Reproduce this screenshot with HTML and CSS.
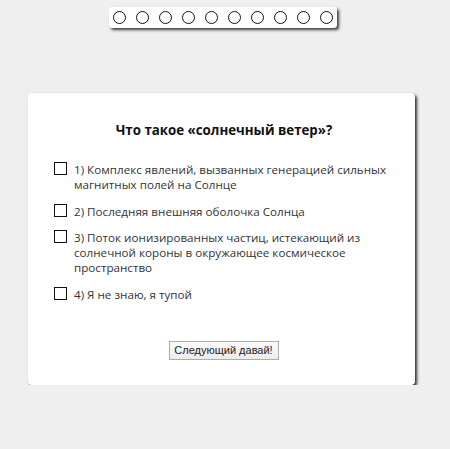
FILE: index.html
```html
<!DOCTYPE html>
<html lang="ru">
<head>
<meta charset="utf-8">
<title>Тест</title>
<link rel="stylesheet" href="styles.css">
</head>
<body>
<div class="progress">
  <span class="dot"></span><span class="dot"></span><span class="dot"></span><span class="dot"></span><span class="dot"></span>
  <span class="dot"></span><span class="dot"></span><span class="dot"></span><span class="dot"></span><span class="dot"></span>
</div>
<div class="card">
  <h1 class="question">Что такое «солнечный ветер»?</h1>
  <ul class="answers">
    <li class="answer"><span class="box"></span><span class="label">1) Комплекс явлений, вызванных генерацией сильных магнитных полей на Солнце</span></li>
    <li class="answer"><span class="box"></span><span class="label">2) Последняя внешняя оболочка Солнца</span></li>
    <li class="answer"><span class="box"></span><span class="label">3) Поток ионизированных частиц, истекающий из солнечной короны в окружающее космическое пространство</span></li>
    <li class="answer"><span class="box"></span><span class="label">4) Я не знаю, я тупой</span></li>
  </ul>
  <div class="actions"><button class="next" type="button">Следующий давай!</button></div>
</div>
</body>
</html>
```
FILE: styles.css
```css
html, body {
  margin: 0;
  padding: 0;
}
body {
  background: #efefef;
  font-family: "Open Sans", "Noto Sans", sans-serif;
  color: #222;
  padding-top: 7px;
}
.progress {
  margin-left: 109px;
  width: 228px;
  height: 21px;
  box-sizing: border-box;
  background: #fff;
  border-radius: 3px;
  box-shadow: 2px 2px 3px rgba(0, 0, 0, 0.75);
  display: flex;
  align-items: center;
  gap: 10px;
  padding-left: 4px;
}
.dot {
  width: 13px;
  height: 13px;
  box-sizing: border-box;
  border: 1.3px solid #111;
  border-radius: 50%;
  flex: none;
}
.card {
  margin: 65px 0 0 28px;
  width: 387px;
  height: 292px;
  box-sizing: border-box;
  background: #fff;
  border-radius: 4px;
  box-shadow: 2px 2px 3px rgba(0, 0, 0, 0.8);
  padding: 28px 18px 0 26px;
}
.question {
  margin: 0;
  text-align: center;
  font-size: 13.3px;
  font-weight: 700;
  line-height: 18px;
  color: #111;
  padding-right: 3px;
}
.answers {
  list-style: none;
  margin: 23px 0 0;
  padding: 0;
  display: flex;
  flex-direction: column;
  gap: 11.5px;
}
.answer {
  display: flex;
  gap: 7px;
  align-items: flex-start;
  font-size: 11.65px;
  line-height: 15px;
  color: #333;
}
.box {
  flex: none;
  width: 13px;
  height: 13px;
  box-sizing: border-box;
  border: 1px solid #111;
  background: #fff;
}
.actions {
  display: flex;
  justify-content: center;
  margin-top: 39px;
  padding-right: 4px;
}
.next {
  font-family: "Liberation Sans", Arial, sans-serif;
  font-size: 11px;
  color: #222;
  width: 110px;
  height: 19px;
  padding: 0;
  border: 1px solid #adadad;
  border-radius: 0;
  background: linear-gradient(#fbfbfb, #ececec);
}
```
